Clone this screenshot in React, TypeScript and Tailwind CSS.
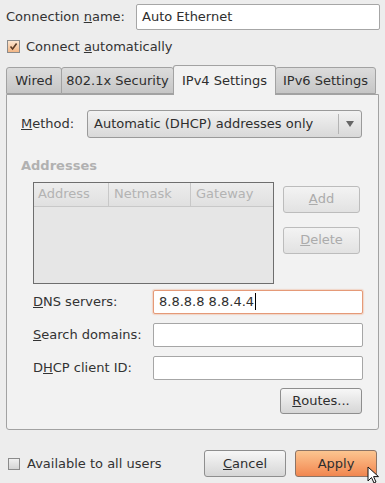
import React from "react";

const font = { fontFamily: '"DejaVu Sans", "Liberation Sans", sans-serif' };

const Entry = ({ value, focus, className }: { value?: string; focus?: boolean; className: string }) => (
    <div
        className={
            "flex items-center bg-white rounded-[2px] px-[5px] " +
            (focus ? "border border-[#e59a78] shadow-[0_0_1px_1px_rgba(240,160,120,0.35)] " : "border border-[#a6a6a6] ") +
            className
        }
    >
        {value && <span className="text-[#2e2e2e]">{value}</span>}
        {focus && <span className="w-px h-[17px] bg-black ml-[1px]" />}
    </div>
);

const Button = ({ children, disabled, primary, className }: { children: React.ReactNode; disabled?: boolean; primary?: boolean; className: string }) => (
    <div
        className={
            "flex items-center justify-center rounded-[3px] border " +
            (primary
                ? "border-[#8c7466] bg-gradient-to-b from-[#fcc590] to-[#f1864f] text-[#2e2e2e] "
                : disabled
                  ? "border-[#bcbcbc] bg-gradient-to-b from-[#f3f3f3] to-[#e2e2e2] text-[#ababab] "
                  : "border-[#8e8e8e] bg-gradient-to-b from-[#f7f7f7] to-[#d6d6d6] text-[#2e2e2e] ") +
            className
        }
    >
        {children}
    </div>
);

const Tab = ({ label, active, className }: { label: string; active?: boolean; className: string }) => (
    <div
        className={
            "flex items-center justify-center border border-[#a2a2a2] rounded-t-[3px] " +
            (active
                ? "h-[30px] bg-[#f2f2f2] border-b-0 text-[#2e2e2e] z-10 mb-[-1px]"
                : "h-[27px] bg-gradient-to-b from-[#dcdcdc] to-[#c6c6c6] text-[#2e2e2e] ") +
            " " +
            className
        }
    >
        {label}
    </div>
);

export default function App() {
    return (
        <div style={font} className="relative w-[385px] h-[483px] bg-[#ededed] text-[13px] text-[#333] overflow-hidden">
            {/* connection name */}
            <div className="flex items-center pt-[4px] pl-[6px]">
                <span className="w-[130px]">
                    Connection <u>n</u>ame:
                </span>
                <Entry value="Auto Ethernet" className="w-[244px] h-[26px]" />
            </div>

            {/* connect automatically */}
            <div className="flex items-center mt-[10px] pl-[7px] h-[13px]">
                <div className="w-[13px] h-[13px] border border-[#8b8b8b] bg-gradient-to-b from-[#fde6d0] to-[#f2b685] flex items-center justify-center">
                    <svg width="9" height="9" viewBox="0 0 9 9">
                        <path d="M1.5 4.5 L3.6 7 L7.6 1.5" fill="none" stroke="#5a3a24" strokeWidth="1.6" />
                    </svg>
                </div>
                <span className="ml-[6px]">
                    Connect <u>a</u>utomatically
                </span>
            </div>

            {/* tabs */}
            <div className="flex items-end mt-[13px] ml-[6px] h-[28px]">
                <Tab label="Wired" className="w-[56px]" />
                <Tab label="802.1x Security" className="w-[113px] -ml-px" />
                <Tab label="IPv4 Settings" active className="w-[103px] -ml-px" />
                <Tab label="IPv6 Settings" className="w-[101px] -ml-px" />
            </div>

            {/* notebook page */}
            <div className="ml-[6px] w-[373px] h-[336px] border border-[#a2a2a2] rounded-b-[3px] bg-[#f2f2f2] flex flex-col">
                <div className="flex items-center mt-[15px] pl-[14px]">
                    <span className="w-[66px]">
                        <u>M</u>ethod:
                    </span>
                    <div className="relative flex items-center w-[275px] h-[28px] rounded-[3px] border border-[#9a9a9a] bg-gradient-to-b from-[#f2f2f2] to-[#d9d9d9] pl-[6px]">
                        <span className="text-[#2e2e2e]">Automatic (DHCP) addresses only</span>
                        <div className="ml-auto w-px h-[20px] bg-[#b4b4b4]" />
                        <svg width="22" height="10" viewBox="0 0 22 10">
                            <path d="M7 2 L15 2 L11 8 Z" fill="#666" />
                        </svg>
                    </div>
                </div>

                <div className="mt-[18px] pl-[14px] font-bold text-[#b1b1b1]">Addresses</div>

                <div className="flex mt-[6px] pl-[26px]">
                    <div className="w-[241px] h-[102px] border border-[#6e6e6e] bg-[#e6e6e6] flex flex-col">
                        <div className="flex h-[24px] bg-gradient-to-b from-[#ededed] to-[#e0e0e0] border-b border-[#c8c8c8] text-[#b3b3b3]">
                            <div className="w-[75px] border-r border-[#c8c8c8] pl-[4px] flex items-center">Address</div>
                            <div className="w-[82px] border-r border-[#c8c8c8] pl-[5px] flex items-center">Netmask</div>
                            <div className="flex-1 pl-[5px] flex items-center">Gateway</div>
                        </div>
                    </div>
                    <div className="flex flex-col ml-[9px] mt-[4px] gap-[14px]">
                        <Button disabled className="w-[77px] h-[27px]">
                            <u>A</u>dd
                        </Button>
                        <Button disabled className="w-[77px] h-[27px]">
                            <u>D</u>elete
                        </Button>
                    </div>
                </div>

                <div className="flex flex-col gap-[9px] mt-[6px] pl-[26px]">
                    <div className="flex items-center">
                        <span className="w-[120px]">
                            <u>D</u>NS servers:
                        </span>
                        <Entry value="8.8.8.8 8.8.4.4" focus className="w-[210px] h-[24px]" />
                    </div>
                    <div className="flex items-center">
                        <span className="w-[120px]">
                            <u>S</u>earch domains:
                        </span>
                        <Entry className="w-[210px] h-[24px]" />
                    </div>
                    <div className="flex items-center">
                        <span className="w-[120px]">
                            D<u>H</u>CP client ID:
                        </span>
                        <Entry className="w-[210px] h-[24px]" />
                    </div>
                </div>

                <div className="flex justify-end mt-[8px] pr-[16px]">
                    <Button className="w-[82px] h-[26px]">
                        <u>R</u>outes...
                    </Button>
                </div>
            </div>

            {/* bottom row */}
            <div className="flex items-center mt-[20px] pl-[8px]">
                <div className="w-[12px] h-[12px] border border-[#8b8b8b] bg-gradient-to-b from-[#f0f0f0] to-[#d4d4d4]" />
                <span className="ml-[7px]">Available to all users</span>
                <Button className="w-[82px] h-[27px] ml-auto">
                    <u>C</u>ancel
                </Button>
                <Button primary className="w-[82px] h-[27px] ml-[9px] mr-[8px]">
                    Apply
                </Button>
            </div>

            {/* mouse pointer */}
            <svg className="absolute left-[367px] top-[466px]" width="14" height="20" viewBox="0 0 14 20">
                <path d="M1 1 L1 15 L4.5 11.5 L7 17 L9 16 L6.6 10.6 L11.5 10.6 Z" fill="#fff" stroke="#111" strokeWidth="1" />
            </svg>
        </div>
    );
}
